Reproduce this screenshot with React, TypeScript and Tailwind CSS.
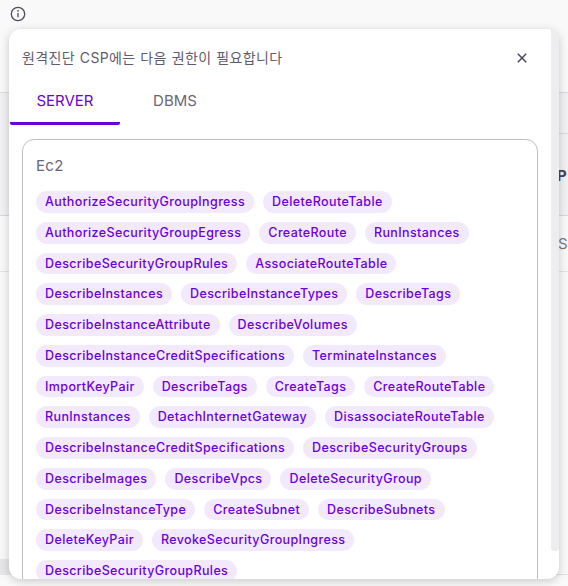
const permissions: string[] = [
  'AuthorizeSecurityGroupIngress', 'DeleteRouteTable',
  'AuthorizeSecurityGroupEgress', 'CreateRoute', 'RunInstances',
  'DescribeSecurityGroupRules', 'AssociateRouteTable',
  'DescribeInstances', 'DescribeInstanceTypes', 'DescribeTags',
  'DescribeInstanceAttribute', 'DescribeVolumes',
  'DescribeInstanceCreditSpecifications', 'TerminateInstances',
  'ImportKeyPair', 'DescribeTags', 'CreateTags', 'CreateRouteTable',
  'RunInstances', 'DetachInternetGateway', 'DisassociateRouteTable',
  'DescribeInstanceCreditSpecifications', 'DescribeSecurityGroups',
  'DescribeImages', 'DescribeVpcs', 'DeleteSecurityGroup',
  'DescribeInstanceType', 'CreateSubnet', 'DescribeSubnets',
  'DeleteKeyPair', 'RevokeSecurityGroupIngress',
  'DescribeSecurityGroupRules',
];

function InfoIcon() {
  return (
    <svg className="ml-[10px] mt-[6px] size-4" viewBox="0 0 16 16" fill="none">
      <circle cx="8" cy="8" r="6.7" stroke="#4f4b5c" strokeWidth="1.3" />
      <path d="M8 7v4.3" stroke="#4f4b5c" strokeWidth="1.3" />
      <circle cx="8" cy="4.9" r="0.8" fill="#4f4b5c" />
    </svg>
  );
}

function PageBehind() {
  return (
    <div className="flex h-full">
      <div className="flex w-1/2 flex-col">
        <div className="h-[93px] border-b border-[#dcdce0]">
          <InfoIcon />
        </div>
        <div className="h-[123px] border-b border-[#d8d8dc] bg-[#f1f1f4]" />
        <div className="h-14 border-b border-[#e4e4e6]" />
        <div className="h-[287px]" />
        <div className="h-4 bg-[#e6e6e9]" />
      </div>
      <div className="flex w-1/2 flex-col items-stretch overflow-hidden">
        <div className="h-[93px] shrink-0 border-b border-[#d9d9de]" />
        <div className="h-[41px] shrink-0 border-b border-[#d9d9de] bg-[#f1f1f4]" />
        <div className="flex h-[82px] shrink-0 items-center border-b border-[#d8d8dc] bg-[#f1f1f4] pl-[273px] pt-1 text-[15px] font-bold text-[#474354]">
          P
        </div>
        <div className="flex h-14 shrink-0 items-center border-b border-[#e4e4e6] pl-[274px] pt-px text-[15px] text-[#7d7988]">
          S
        </div>
        <div className="h-[303px] shrink-0 border-b border-[#dedee0]" />
      </div>
    </div>
  );
}

export default function App() {
  return (
    <div className="relative h-[586px] w-[568px] overflow-hidden bg-[#f9f9f9] font-['Inter','Noto_Sans_CJK_KR',sans-serif]">
      <PageBehind />
      <div className="absolute left-[9px] top-[29px] flex h-[550px] w-[550px] overflow-hidden rounded-xl bg-white shadow-[0_2px_10px_rgba(0,0,0,0.2)]">
        <div className="flex w-[542px] flex-col">
          <div className="flex h-[49px] shrink-0 items-center justify-between pl-[13px] pr-[23px] pt-[9px]">
            <h1 className="text-[14px] leading-5 tracking-[0.35px] [word-spacing:0.6px] text-[#5f5b6d]">
              원격진단 CSP에는 다음 권한이 필요합니다
            </h1>
            <button type="button" aria-label="닫기">
              <svg className="size-3" viewBox="0 0 12 12" fill="none" stroke="#4a465a" strokeWidth="1.5">
                <path d="M1.8 1.8 10.2 10.2M10.2 1.8 1.8 10.2" />
              </svg>
            </button>
          </div>
          <div className="flex h-[47px] shrink-0 pl-px text-[15px]">
            <button type="button" className="w-[110px] rounded-b-[2px] border-b-[3px] border-[#6a00dc] pt-0.5 text-[#6a00dc]">
              SERVER
            </button>
            <button type="button" className="w-[110px] border-b-[3px] border-transparent pt-0.5 text-[#6a6677]">
              DBMS
            </button>
          </div>
          <section className="ml-[13px] mt-[14px] h-[1200px] w-[516px] shrink-0 rounded-xl border border-[#bdbdbf] px-[13px] pt-[14px]">
            <h2 className="h-[37px] text-[15px] leading-6 tracking-[0.3px] text-[#6a6677]">Ec2</h2>
            <ul className="flex flex-wrap gap-[9px]">
              {permissions.map((name, i) => (
                <li
                  key={i}
                  className="h-[21.75px] rounded-full bg-[#f3e9fc] px-[9px] text-[12.5px] font-medium leading-[21.75px] tracking-[0.39px] text-[#6a00dc]"
                >
                  {name}
                </li>
              ))}
            </ul>
          </section>
        </div>
        <div className="h-[522px] w-2 rounded-b-[3px] bg-[#ededef]" />
      </div>
    </div>
  );
}
